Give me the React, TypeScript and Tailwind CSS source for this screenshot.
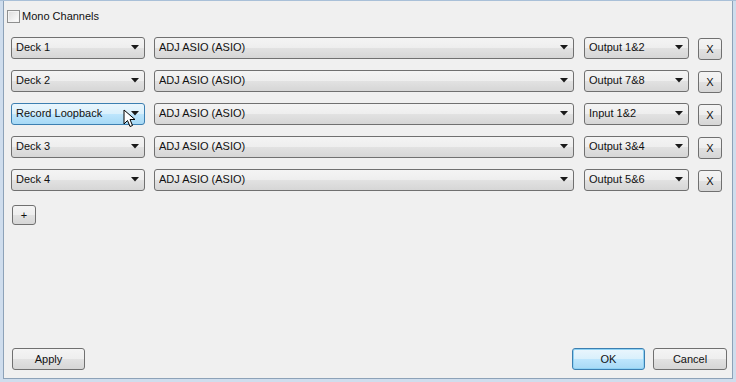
import React from "react";

const font = { fontFamily: '"Liberation Sans", Arial, sans-serif' };

function Arrow() {
  return (
    <svg width="8" height="5" viewBox="0 0 8 5" className="shrink-0">
      <path d="M0 0 L8 0 L4 4.5 Z" fill="#1a1a1a" />
    </svg>
  );
}

function Combo({ label, w, active }: { label: string; w: string; active?: boolean }) {
  return (
    <div
      className={`${w} h-[22px] rounded-[3px] border flex items-center pl-[4px] pr-[5px] text-[11px] text-[#111] ${
        active
          ? "border-[#3c7fb1] bg-[linear-gradient(#eaf6fd_0%,#d9f0fc_50%,#bee6fd_50%,#a7d9f5_100%)]"
          : "border-[#707070] bg-[linear-gradient(#f4f4f4_0%,#eeeeee_50%,#e2e2e2_50%,#d6d6d6_100%)]"
      }`}
    >
      <span className="flex-1 truncate">{label}</span>
      <Arrow />
    </div>
  );
}

function Btn({ label, w, h, primary }: { label: string; w: string; h: string; primary?: boolean }) {
  return (
    <div
      className={`${w} ${h} rounded-[3px] border flex items-center justify-center text-[11px] text-[#111] ${
        primary
          ? "border-[#3c7fb1] shadow-[inset_0_0_0_1px_#8fd2f4] bg-[linear-gradient(#eaf6fd_0%,#d9f0fc_50%,#bee6fd_50%,#a7d9f5_100%)]"
          : "border-[#707070] bg-[linear-gradient(#f4f4f4_0%,#eeeeee_50%,#e2e2e2_50%,#d6d6d6_100%)]"
      }`}
    >
      {label}
    </div>
  );
}

const rows = [
  { deck: "Deck 1", out: "Output 1&2" },
  { deck: "Deck 2", out: "Output 7&8" },
  { deck: "Record Loopback", out: "Input 1&2", active: true },
  { deck: "Deck 3", out: "Output 3&4" },
  { deck: "Deck 4", out: "Output 5&6" },
];

export default function App() {
  return (
    <div style={font} className="w-[736px] h-[382px] bg-[#dbe6f2] border-t border-[#a9c0d8] flex flex-col">
      <div className="flex-1 flex min-h-0">
        <div className="w-[3px] bg-[#cfdded]" />
        <div className="flex-1 bg-[#f0f0f0] border-l border-r border-b border-[#8da2b8] flex flex-col relative">
          <div className="flex items-center h-[16px] mt-[7px] ml-[3px]">
            <div className="w-[13px] h-[13px] border border-[#8e8f8f] bg-[linear-gradient(135deg,#dcdcdc,#ffffff)] shadow-[inset_0_0_0_1px_#f4f4f4]" />
            <span className="ml-[2px] text-[11px] text-[#111]">Mono Channels</span>
          </div>
          <div className="flex flex-col mt-[7px]">
            {rows.map((r, i) => (
              <div key={i} className="h-[33px] flex items-center ml-[7px]">
                <Combo label={r.deck} w="w-[134px]" active={r.active} />
                <div className="w-[9px]" />
                <Combo label="ADJ ASIO (ASIO)" w="w-[420px]" />
                <div className="w-[10px]" />
                <Combo label={r.out} w="w-[105px]" />
                <div className="w-[9px]" />
                <div className="mt-[3px]">
                  <Btn label="X" w="w-[24px]" h="h-[22px]" />
                </div>
              </div>
            ))}
          </div>
          <div className="ml-[8px] mt-[9px]">
            <Btn label="+" w="w-[24px]" h="h-[20px]" />
          </div>
          <div className="flex-1" />
          <div className="flex items-center mb-[8px] ml-[8px] mr-[5px]">
            <Btn label="Apply" w="w-[73px]" h="h-[22px]" />
            <div className="flex-1" />
            <Btn label="OK" w="w-[73px]" h="h-[22px]" primary />
            <div className="w-[8px]" />
            <Btn label="Cancel" w="w-[74px]" h="h-[22px]" />
          </div>
          <svg className="absolute left-[119px] top-[108px]" width="14" height="20" viewBox="0 0 14 20">
            <path d="M1 1 L1 15 L4.5 11.5 L7 17.5 L9.5 16.5 L7 10.5 L12 10.5 Z" fill="#fff" stroke="#000" strokeWidth="1" />
          </svg>
        </div>
        <div className="w-[3px] bg-[#cfdded]" />
      </div>
      <div className="h-[3px] bg-[#cfdded]" />
    </div>
  );
}
